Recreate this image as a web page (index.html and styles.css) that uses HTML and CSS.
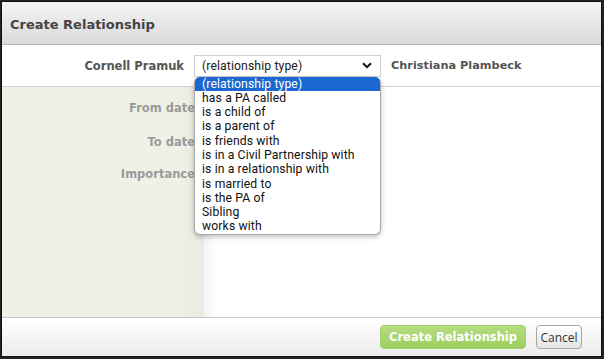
FILE: index.html
```html
<!DOCTYPE html>
<html>
<head>
<meta charset="utf-8">
<link rel="stylesheet" href="styles.css">
</head>
<body>
<div class="dialog">
  <div class="header"><h1 class="title">Create Relationship</h1></div>
  <div class="people">
    <div class="person left">Cornell Pramuk</div>
    <div class="select-wrap">
      <div class="select">
        <span>(relationship type)</span>
        <svg class="chev" width="10" height="7" viewBox="0 0 10 7"><path d="M1 1.2 L5 5.2 L9 1.2" fill="none" stroke="#111" stroke-width="2"/></svg>
      </div>
      <ul class="options">
        <li class="sel">(relationship type)</li>
        <li>has a PA called</li>
        <li>is a child of</li>
        <li>is a parent of</li>
        <li>is friends with</li>
        <li>is in a Civil Partnership with</li>
        <li>is in a relationship with</li>
        <li>is married to</li>
        <li>is the PA of</li>
        <li>Sibling</li>
        <li>works with</li>
      </ul>
    </div>
    <div class="person right">Christiana Plambeck</div>
  </div>
  <div class="body">
    <div class="labels">
      <div class="label l1">From date</div>
      <div class="label l2">To date</div>
      <div class="label l3">Importance</div>
    </div>
    <div class="fields"></div>
  </div>
  <div class="footer">
    <button class="btn primary">Create Relationship</button>
    <button class="btn cancel">Cancel</button>
  </div>
</div>
</body>
</html>
```
FILE: styles.css
```css
html, body {
  margin: 0;
  padding: 0;
  background: #222;
}
.dialog {
  width: 601px;
  height: 356px;
  margin: 1px 0 0 1px;
  border: 1px solid #111;
  background: #fff;
  display: flex;
  flex-direction: column;
  font-family: "DejaVu Sans", Verdana, sans-serif;
  box-sizing: border-box;
  overflow: hidden;
  position: relative;
}
.header {
  height: 42px;
  flex: none;
  background: linear-gradient(#f4f4f4, #dadada);
  border-bottom: 1px solid #b4b4b4;
  display: flex;
  align-items: center;
  padding-left: 8px;
}
.title {
  margin: 0;
  font-size: 13px;
  font-weight: bold;
  color: #444;
  position: relative;
  top: 1px;
}
.people {
  height: 41px;
  flex: none;
  border-bottom: 1px solid #d2d2d2;
  display: flex;
  align-items: center;
}
.person {
  font-size: 11.5px;
  font-weight: bold;
  color: #555;
}
.person.left {
  width: 182px;
  text-align: right;
  margin-right: 10px;
}
.person.right {
  margin-left: 10px;
  font-size: 11.3px;
}
.select-wrap {
  position: relative;
  width: 187px;
}
.select {
  height: 22px;
  box-sizing: border-box;
  border: 1px solid #cfcfcf;
  background: #fff;
  display: flex;
  align-items: center;
  justify-content: space-between;
  padding: 0 8px 0 7px;
  font-family: Roboto, "Open Sans", sans-serif;
  font-size: 12.2px;
  letter-spacing: 0.12px;
  color: #222;
}
.chev { display: block; }
.options {
  position: absolute;
  left: 0;
  top: 22px;
  width: 187px;
  margin: 0;
  padding: 0;
  list-style: none;
  background: #fff;
  border: 1px solid #a8a8a8;
  border-top: none;
  border-radius: 6px;
  box-shadow: 0 2px 5px rgba(0,0,0,0.25);
  box-sizing: border-box;
  font-family: Roboto, "Open Sans", sans-serif;
  font-size: 12.2px;
  letter-spacing: 0.12px;
  color: #111;
  z-index: 5;
}
.options li {
  height: 14.3px;
  line-height: 14.3px;
  padding-left: 7px;
  white-space: nowrap;
}
.options li.sel {
  background: #1a67d2;
  color: #fff;
  border-radius: 5px 5px 0 0;
}
.body {
  flex: 1;
  display: flex;
}
.labels {
  width: 202px;
  background: linear-gradient(90deg, #eff1e6 85%, #e9ebe0);
  position: relative;
}
.label {
  position: absolute;
  right: 9px;
  font-size: 11.5px;
  font-weight: bold;
  color: #9a9a9a;
}
.l1 { top: 14px; }
.l2 { top: 48px; }
.l3 { top: 80px; }
.fields {
  flex: 1;
  background: linear-gradient(90deg, #f3f3f3, #fff 12px);
}
.footer {
  height: 38px;
  flex: none;
  border-top: 1px solid #c9c9c9;
  background: linear-gradient(#fff, #ececec);
  display: flex;
  align-items: center;
  justify-content: flex-end;
  padding-right: 19px;
  gap: 10px;
}
.btn {
  height: 24px;
  box-sizing: border-box;
  border-radius: 4px;
  padding: 0;
  cursor: pointer;
}
.btn.primary {
  width: 146px;
  background: linear-gradient(#b5dd82, #9cce5c);
  border: 1px solid #a3cf6b;
  color: #fff;
  font-family: "DejaVu Sans", Verdana, sans-serif;
  font-weight: bold;
  font-size: 11.5px;
}
.btn.cancel {
  width: 46px;
  background: linear-gradient(#fff, #e4e4e4);
  border: 1px solid #a7a7a7;
  color: #333;
  font-family: "Open Sans", "Noto Sans", sans-serif;
  font-size: 12px;
}
```
